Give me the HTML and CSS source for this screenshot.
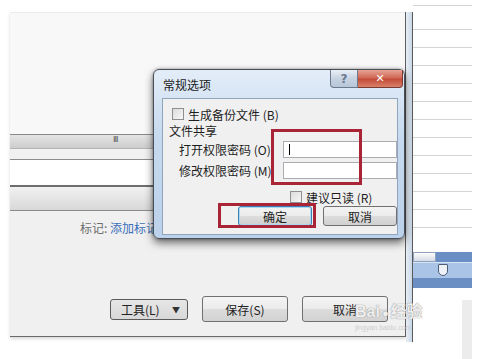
FILE: index.html
```html
<!DOCTYPE html>
<html lang="zh-CN">
<head>
  <meta charset="UTF-8" />
  <title>常规选项</title>
  <link rel="stylesheet" href="styles.css">
</head>
<body>
  <div class="desk">
    <div class="win">
      <div class="top-area"></div>
      <div class="hscroll"><span class="grip">III</span></div>
      <div class="gap-row"></div>
      <div class="white-row"></div>
      <div class="band"></div>
      <div class="foot">
        <div class="tags"><span class="tag-label">标记:</span> <span class="tag-link">添加标记</span></div>
        <div class="actions">
          <button class="btn tools">工具(L)<span class="caret">▼</span></button>
          <button class="btn big">保存(S)</button>
          <button class="btn big">取消</button>
        </div>
      </div>
    </div>
    <div class="edge"></div>
    <div class="side">
      <div class="ruled"></div>
      <div class="slider">
        <div class="slider-top"><span class="knob"></span></div>
        <div class="slider-mid"><span class="marker"></span></div>
        <div class="slider-low"></div>
      </div>
      <div class="side-rest"><span class="strip"></span></div>
    </div>
  </div>

  <div class="dialog">
    <div class="titlebar">
      <span class="title">常规选项</span>
      <div class="caption-btns">
        <span class="cap help">?</span>
        <span class="cap close">✕</span>
      </div>
    </div>
    <div class="client">
      <label class="check"><span class="box"></span>生成备份文件 (B)</label>
      <div class="group">文件共享</div>
      <div class="field">
        <span class="field-label">打开权限密码 (O)</span>
        <span class="input"><span class="cursor"></span></span>
      </div>
      <div class="field">
        <span class="field-label">修改权限密码 (M)</span>
        <span class="input"></span>
      </div>
      <label class="check readonly"><span class="box"></span>建议只读 (R)</label>
      <div class="dlg-actions">
        <button class="dbtn ok">确定</button>
        <button class="dbtn">取消</button>
      </div>
    </div>
  </div>

  <div class="mark mark-inputs"></div>
  <div class="mark mark-ok"></div>

  <div class="watermark">
    <span class="wm-main">Bai<span class="paw">●</span>经验</span>
    <span class="wm-sub">jingyan.baidu.com</span>
  </div>
</body>
</html>
```

FILE: styles.css
```css
* {
  margin: 0;
  padding: 0;
  box-sizing: border-box;
}

body {
  width: 479px;
  height: 359px;
  overflow: hidden;
  background: #ffffff;
  font-family: "Noto Sans CJK SC", "Liberation Sans", sans-serif;
  font-size: 12px;
  color: #1e1e1e;
  position: relative;
}

/* background windows */
.desk {
  display: flex;
  padding: 12px 0 0 10px;
}

.win {
  width: 396px;
  height: 325px;
  display: flex;
  flex-direction: column;
  background: #f0f0f0;
  border-right: 1px solid #5c5c5c;
  border-bottom: 1px solid #6a6a6a;
  box-shadow: 0 2px 3px rgba(0, 0, 0, 0.15);
}

.top-area {
  height: 122px;
  background: #f8f8f8;
  border-top: 1px solid #ececec;
}

.hscroll {
  height: 14px;
  border-top: 1px solid #8a8a8a;
  background: linear-gradient(#e4e4e4, #cdcdcd);
  position: relative;
}

.grip {
  position: absolute;
  left: 103px;
  top: -1px;
  font-size: 9px;
  letter-spacing: -1px;
  color: #555;
  font-family: "Liberation Sans", sans-serif;
}

.gap-row {
  height: 12px;
  background: #f1f1f1;
  border-top: 1px solid #b4b4b4;
  border-bottom: 1px solid #8c8c8c;
}

.white-row {
  height: 25px;
  background: #fff;
}

.band {
  height: 26px;
  border-top: 2px solid #6e6e6e;
  border-bottom: 1px solid #8a8a8a;
  background: linear-gradient(#f1f1f1, #d8d8d8);
}

.foot {
  flex: 1;
  display: flex;
  flex-direction: column;
  justify-content: space-between;
  padding: 8px 9px 14px 70px;
}

.tags {
  font-size: 12px;
  color: #6d6d6d;
}

.tag-link {
  color: #3a6fb8;
}

.actions {
  display: flex;
  align-items: center;
  gap: 14px;
  padding-left: 30px;
}

.btn {
  font-family: "Noto Sans CJK SC", "Liberation Sans", sans-serif;
  font-size: 12px;
  color: #222;
  border: 1px solid #707070;
  border-radius: 3px;
  background: linear-gradient(#f4f4f4 0%, #ebebeb 50%, #dcdcdc 51%, #d2d2d2 100%);
  height: 26px;
}

.tools {
  width: 78px;
  height: 21px;
  background: linear-gradient(#e6e6e6, #d8d8d8);
  border-color: #5a5a5a;
  text-align: left;
  padding-left: 10px;
  display: flex;
  align-items: center;
  justify-content: space-between;
  padding-right: 7px;
}

.caret {
  font-size: 8px;
  color: #333;
}

.big {
  width: 86px;
}

.edge {
  width: 7px;
  height: 330px;
  background: linear-gradient(90deg, #e9eef4, #c9d8e8);
  border-right: 1px solid #5a5a5a;
}

.side {
  width: 59px;
  display: flex;
  flex-direction: column;
}

.ruled {
  height: 240px;
  background: repeating-linear-gradient(#fff 0, #fff 17px, #d4d4d4 17px, #d4d4d4 18px);
  margin-top: -12px;
  background-position: 0 12px;
}

.slider {
  display: flex;
  flex-direction: column;
  margin-top: 12px;
}

.slider-top {
  height: 10px;
  background: #6a8fc4;
  position: relative;
}

.knob {
  position: absolute;
  left: 0;
  top: 0;
  width: 23px;
  height: 10px;
  background: linear-gradient(#fdfdfd, #d4dbe6);
  border: 1px solid #8ea2bd;
}

.slider-mid {
  height: 16px;
  background: #a9c4e6;
  border-top: 1px solid #d8e4f2;
  position: relative;
}

.marker {
  position: absolute;
  left: 25px;
  top: 1px;
  width: 10px;
  height: 12px;
  background: #eef2f7;
  border: 1px solid #4b5d78;
  border-radius: 1px 1px 5px 5px;
}

.slider-low {
  height: 10px;
  background: #6c8fc3;
}

.side-rest {
  flex: 1;
  display: flex;
  justify-content: flex-end;
  padding-top: 12px;
}

.strip {
  width: 10px;
  height: 60px;
  background: #ececec;
}

/* the dialog over the window */
.dialog {
  position: absolute;
  left: 153px;
  top: 69px;
  width: 252px;
  height: 170px;
  border: 1px solid #4a4f57;
  border-radius: 6px;
  background: linear-gradient(#e3edf8, #c6d9ee 40%, #bcd2ea);
  padding: 0 6px 3px 8px;
  display: flex;
  flex-direction: column;
  box-shadow: 0 4px 9px rgba(0, 0, 0, 0.55), 0 0 3px rgba(0, 0, 0, 0.35);
}

.titlebar {
  height: 28px;
  display: flex;
  justify-content: space-between;
  align-items: flex-start;
}

.title {
  padding: 6px 0 0 1px;
  font-size: 12px;
  color: #222;
}

.caption-btns {
  display: flex;
  margin-right: -5px;
}

.cap {
  height: 18px;
  display: flex;
  align-items: center;
  justify-content: center;
  border: 1px solid #6b7a8e;
  border-top: none;
  font-family: "DejaVu Sans", sans-serif;
}

.help {
  width: 28px;
  border-radius: 0 0 0 4px;
  background: linear-gradient(#e9eff6, #c7d3e1 50%, #b7c6d8);
  color: #6a7a90;
  font-size: 12px;
  font-weight: bold;
}

.close {
  width: 45px;
  border-left: none;
  border-radius: 0 0 4px 0;
  border-color: #7a3a32;
  background: linear-gradient(#e8a493, #d06a58 45%, #c44c38 55%, #d9826a);
  color: #fff;
  font-size: 11px;
  font-weight: bold;
}

.client {
  flex: 1;
  background: #f0f0f0;
  border: 1px solid #8fa5be;
  padding: 8px 0 0 6px;
  display: flex;
  flex-direction: column;
  font-size: 12px;
}

.check {
  display: flex;
  align-items: center;
  gap: 4px;
  height: 14px;
  padding-left: 3px;
}

.box {
  width: 12px;
  height: 12px;
  border: 1px solid #8e8f8f;
  background: linear-gradient(135deg, #dcdcdc, #f7f7f7);
}

.group {
  margin-top: 2px;
  height: 16px;
  line-height: 16px;
}

.field {
  display: flex;
  align-items: center;
  justify-content: space-between;
  height: 17px;
  padding-left: 10px;
  margin-top: 2px;
}

.field + .field {
  margin-top: 4px;
}

.field-label {
  line-height: 17px;
  white-space: nowrap;
}

.input {
  width: 114px;
  height: 17px;
  border: 1px solid #abadb3;
  background: #fff;
  position: relative;
}

.cursor {
  position: absolute;
  left: 5px;
  top: 2px;
  width: 1px;
  height: 11px;
  background: #000;
}

.readonly {
  margin: 11px 0 0 115px;
  padding-left: 6px;
}

.dlg-actions {
  display: flex;
  gap: 11px;
  margin: 2px 0 0 69px;
}

.dbtn {
  width: 74px;
  height: 20px;
  font-family: "Noto Sans CJK SC", sans-serif;
  font-size: 12px;
  color: #222;
  border: 1px solid #707070;
  border-radius: 3px;
  background: linear-gradient(#f3f3f3, #ebebeb 50%, #dddddd 51%, #d0d0d0);
}

.ok {
  border-color: #3c7fb1;
  box-shadow: inset 0 0 0 1px #a8d8f2;
}

/* red annotation boxes */
.mark {
  position: absolute;
  border: 3px solid #aa2438;
}

.mark-inputs {
  left: 271px;
  top: 129px;
  width: 91px;
  height: 56px;
}

.mark-ok {
  left: 218px;
  top: 203px;
  width: 98px;
  height: 25px;
}

.watermark {
  position: absolute;
  left: 355px;
  top: 304px;
  display: flex;
  flex-direction: column;
  color: rgba(255, 255, 255, 0.85);
  text-shadow: 0 0 1px #9a9a9a, 0 0 1px #9a9a9a;
  line-height: 1;
}

.wm-main {
  font-family: "Liberation Sans", "Noto Sans CJK SC", sans-serif;
  font-size: 16px;
  font-weight: bold;
}

.paw {
  font-size: 11px;
  margin: 0 2px;
}

.wm-sub {
  font-family: "Liberation Sans", sans-serif;
  font-size: 7px;
  margin-top: 4px;
  color: rgba(200, 200, 200, 0.9);
  text-shadow: none;
}
```
